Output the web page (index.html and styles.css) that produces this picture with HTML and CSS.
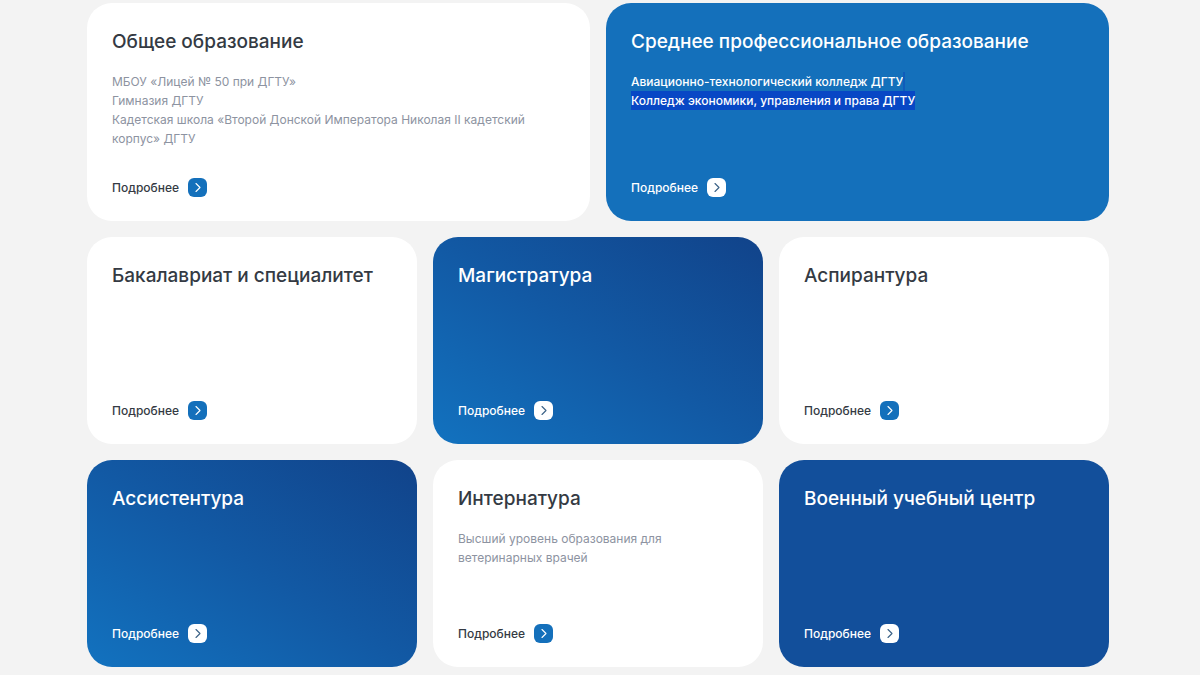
FILE: index.html
```html
<!DOCTYPE html>
<html lang="ru">
<head>
<meta charset="utf-8">
<meta name="viewport" content="width=device-width, initial-scale=1">
<title>Образование</title>
<link rel="stylesheet" href="styles.css">
</head>
<body>
<svg class="sprite" aria-hidden="true">
  <symbol id="chevron" viewBox="0 0 19 19"><path d="M8 5.5l4 4-4 4" fill="none" stroke="currentColor" stroke-width="1.1" stroke-linecap="round" stroke-linejoin="round"/></symbol>
</svg>
<main class="programs">
  <article class="card card-wide">
    <h2 class="card-title">Общее образование</h2>
    <p class="card-text">МБОУ «Лицей № 50 при ДГТУ»<br>Гимназия ДГТУ<br>Кадетская школа «Второй Донской Императора Николая II кадетский корпус» ДГТУ</p>
    <a class="more" href="#">Подробнее <svg class="more-icon"><use href="#chevron"/></svg></a>
  </article>
  <article class="card card-wide card-filled card-sky">
    <h2 class="card-title">Среднее профессиональное образование</h2>
    <p class="card-text">Авиационно-технологический колледж ДГТУ<span class="selection-edge"></span><br><mark class="selection">Колледж экономики, управления и права ДГТУ</mark></p>
    <a class="more" href="#">Подробнее <svg class="more-icon"><use href="#chevron"/></svg></a>
  </article>
  <article class="card">
    <h2 class="card-title">Бакалавриат и специалитет</h2>
    <a class="more" href="#">Подробнее <svg class="more-icon"><use href="#chevron"/></svg></a>
  </article>
  <article class="card card-filled card-gradient">
    <h2 class="card-title">Магистратура</h2>
    <a class="more" href="#">Подробнее <svg class="more-icon"><use href="#chevron"/></svg></a>
  </article>
  <article class="card">
    <h2 class="card-title">Аспирантура</h2>
    <a class="more" href="#">Подробнее <svg class="more-icon"><use href="#chevron"/></svg></a>
  </article>
  <article class="card card-filled card-gradient">
    <h2 class="card-title">Ассистентура</h2>
    <a class="more" href="#">Подробнее <svg class="more-icon"><use href="#chevron"/></svg></a>
  </article>
  <article class="card">
    <h2 class="card-title">Интернатура</h2>
    <p class="card-text card-text-narrow">Высший уровень образования для ветеринарных врачей</p>
    <a class="more" href="#">Подробнее <svg class="more-icon"><use href="#chevron"/></svg></a>
  </article>
  <article class="card card-filled card-navy">
    <h2 class="card-title">Военный учебный центр</h2>
    <a class="more" href="#">Подробнее <svg class="more-icon"><use href="#chevron"/></svg></a>
  </article>
</main>
</body>
</html>
```
FILE: styles.css
```css
* {
  box-sizing: border-box;
}

body {
  margin: 0;
  background: #f3f3f3;
  color: #343a43;
  font-family: Inter, "Noto Sans", sans-serif;
}

.sprite {
  display: none;
}

.programs {
  display: grid;
  grid-template-columns: repeat(6, 1fr);
  gap: 16px;
  padding: 3px 91px 7px 87px;
}

.card {
  grid-column: span 2;
  display: flex;
  flex-direction: column;
  align-items: flex-start;
  min-height: 207px;
  padding: 26px 25px 24px;
  border-radius: 25px;
  background: #fff;
}

.card-wide {
  grid-column: span 3;
  min-height: 218px;
}

.card-filled {
  color: #fff;
}

.card-sky {
  background: #1470bb;
}

.card-navy {
  background: #124f9b;
}

.card-gradient {
  background: linear-gradient(to top right, #1272bf 0%, #1259a4 50%, #11438a 100%);
}

.card-title {
  margin: 0;
  font-size: 19px;
  font-weight: 500;
  line-height: 26px;
}

.card-text {
  margin: 17px 0 0;
  color: #8d93a1;
  font-size: 12px;
  line-height: 19px;
}

.card-text-narrow {
  max-width: 240px;
}

.card-filled .card-text {
  color: #fff;
}

.card-filled .card-text,
.card-filled .more {
  font-weight: 500;
}

.selection {
  padding: 2px 0;
  background: #0847c5;
  color: inherit;
}

.selection-edge {
  padding: 2px 1px;
  background: #0f5cba;
}

.more {
  display: flex;
  align-items: center;
  gap: 9px;
  margin-top: auto;
  color: inherit;
  font-size: 12px;
  font-weight: 500;
  line-height: 19px;
  text-decoration: none;
}

.more-icon {
  width: 19px;
  height: 19px;
  border-radius: 6px;
  background: #1470bb;
  color: #fff;
}

.card-filled .more-icon {
  background: #fff;
  color: #3a6186;
}
```
